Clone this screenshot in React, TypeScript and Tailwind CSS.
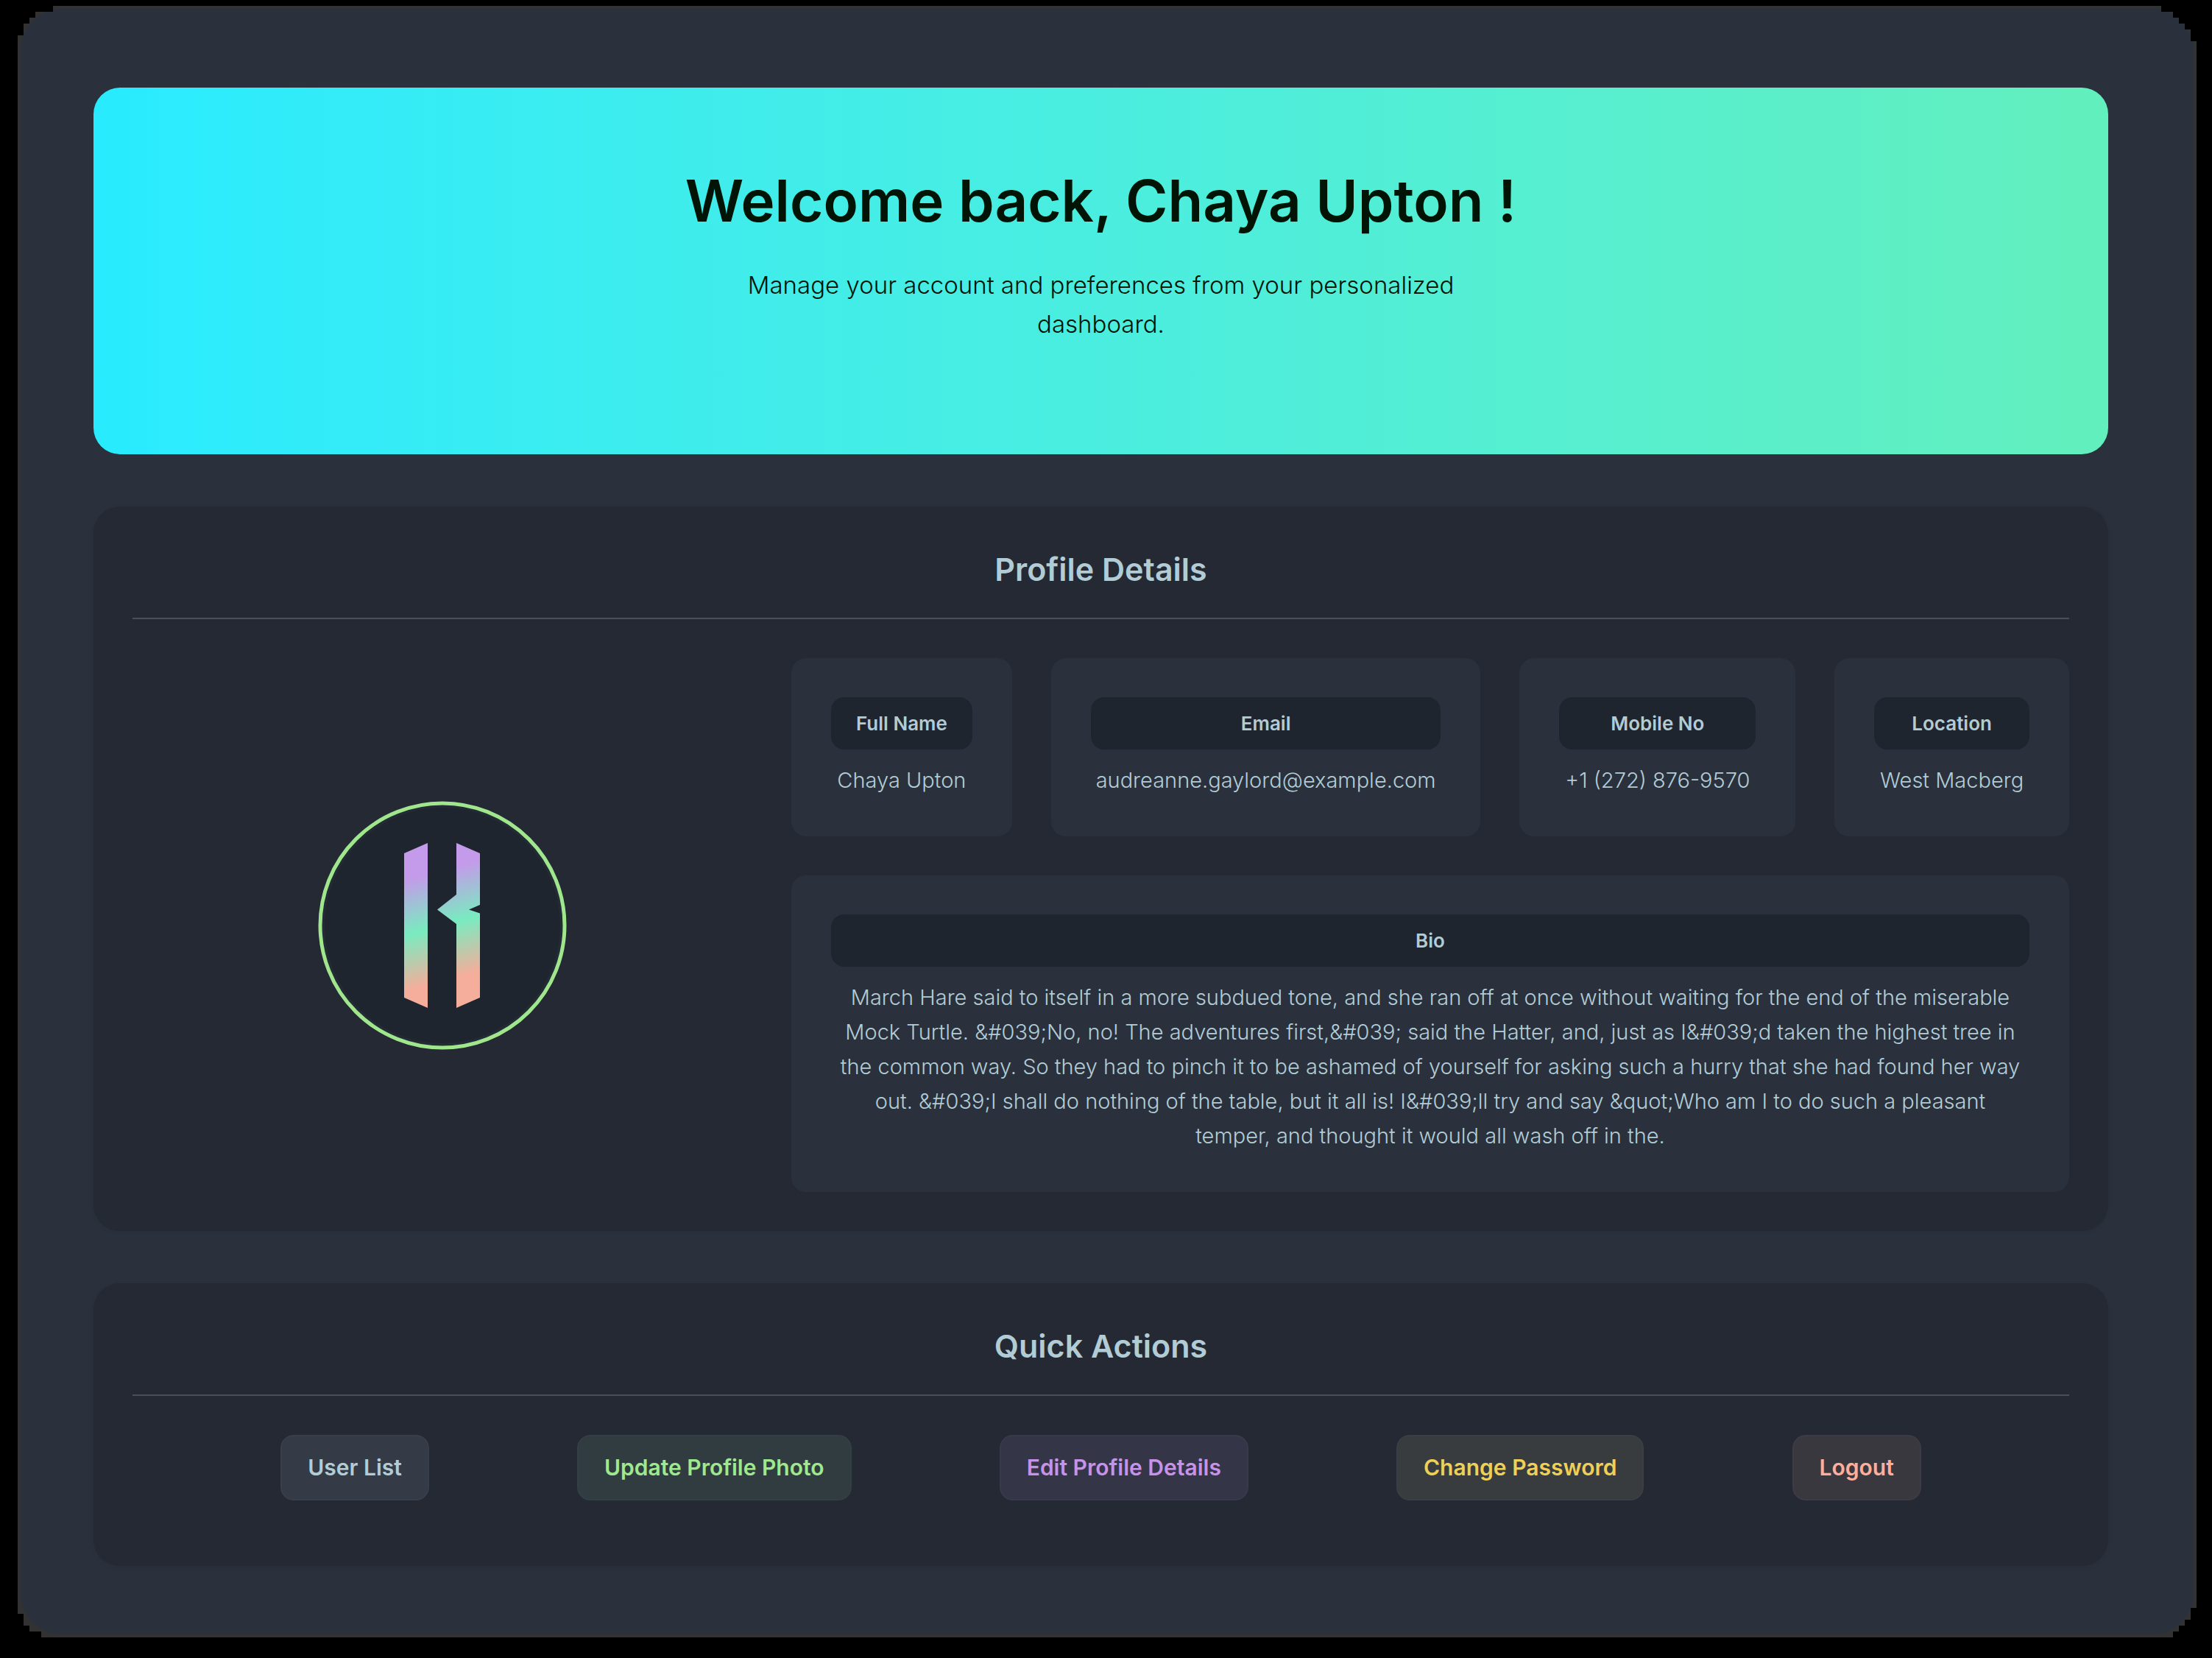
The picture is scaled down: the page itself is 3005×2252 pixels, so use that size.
import type { ReactNode } from "react";

const fields = [
  { label: "Full Name", value: "Chaya Upton" },
  { label: "Email", value: "audreanne.gaylord@example.com" },
  { label: "Mobile No", value: "+1 (272) 876-9570" },
  { label: "Location", value: "West Macberg" },
];

const bio = [
  "March Hare said to itself in a more subdued tone, and she ran off at once without waiting for the end of the miserable",
  "Mock Turtle. &#039;No, no! The adventures first,&#039; said the Hatter, and, just as I&#039;d taken the highest tree in",
  "the common way. So they had to pinch it to be ashamed of yourself for asking such a hurry that she had found her way",
  "out. &#039;I shall do nothing of the table, but it all is! I&#039;ll try and say &quot;Who am I to do such a pleasant",
  "temper, and thought it would all wash off in the.",
];

const actions = [
  { label: "User List", style: "border-[#383e4a] bg-[#343a46] text-[#b2ccd6]" },
  { label: "Update Profile Photo", style: "border-[#343f45] bg-[#303c3f] text-[#9fe88d]" },
  { label: "Edit Profile Details", style: "border-[#383a4c] bg-[#353548] text-[#c792e9]" },
  { label: "Change Password", style: "border-[#3a3f43] bg-[#383c3e] text-[#efd057]" },
  { label: "Logout", style: "border-[#3d3b44] bg-[#3a383f] text-[#ffae9b]" },
];

function Section({ title, children }: { title: string; children: ReactNode }) {
  return (
    <section className="rounded-[36px] bg-[#242933] p-[53px] shadow-[0_2px_6px_rgba(0,0,0,0.06)]">
      <h2 className="text-center text-[43px] leading-[64px] font-semibold">{title}</h2>
      <hr className="mt-[34px] mb-[53px] border-t-2 border-[#4a4e58]" />
      {children}
    </section>
  );
}

function Field({ label, children }: { label: string; children: ReactNode }) {
  return (
    <div className="rounded-[20px] bg-[#2a313c] px-[54px] py-[53px] text-center">
      <dt className="rounded-[18px] bg-[#1f252e] text-[26px] leading-[71px] font-semibold whitespace-nowrap">
        {label}
      </dt>
      <dd className="mt-[18px] text-[29px] leading-[47px] font-light">{children}</dd>
    </div>
  );
}

function Avatar() {
  return (
    <svg viewBox="0 0 338 338" className="w-[338px]" role="img" aria-label="Profile photo">
      <defs>
        <linearGradient id="mark" gradientUnits="userSpaceOnUse" x1="34.5" y1="129" x2="72.5" y2="270.5">
          <stop offset="0" stopColor="#c49aea" />
          <stop offset="0.5" stopColor="#79ebc0" />
          <stop offset="1" stopColor="#f4ae9b" />
        </linearGradient>
      </defs>
      <circle cx="169" cy="169" r="166" fill="#232b34" stroke="#a0e68c" strokeWidth="5" />
      <circle cx="169" cy="169" r="160" fill="#1f252e" />
      <path
        fill="url(#mark)"
        d="M117 71L149 57V281L117 267ZM188 57L220 71V141L205 147.500L220 152.500V267L188 281V167L162 147.500L188 127Z"
      />
    </svg>
  );
}

export default function App() {
  return (
    <div className="min-h-screen bg-black pt-2 pr-[21px] pb-7 pl-6 font-[Inter,sans-serif] text-[#b2ccd6]">
      <div className="bg-[#323232] p-1 [clip-path:polygon(0_40px,8px_40px,8px_24px,16px_24px,16px_16px,24px_16px,24px_8px,48px_8px,48px_0,calc(100%-48px)_0,calc(100%-48px)_8px,calc(100%-32px)_8px,calc(100%-32px)_16px,calc(100%-24px)_16px,calc(100%-24px)_24px,calc(100%-16px)_24px,calc(100%-16px)_32px,calc(100%-8px)_32px,calc(100%-8px)_48px,100%_48px,100%_calc(100%-40px),calc(100%-8px)_calc(100%-40px),calc(100%-8px)_calc(100%-24px),calc(100%-16px)_calc(100%-24px),calc(100%-16px)_calc(100%-16px),calc(100%-24px)_calc(100%-16px),calc(100%-24px)_calc(100%-8px),calc(100%-32px)_calc(100%-8px),calc(100%-32px)_100%,32px_100%,32px_calc(100%-8px),16px_calc(100%-8px),16px_calc(100%-16px),8px_calc(100%-16px),8px_calc(100%-32px),0_calc(100%-32px))]">
        <main className="flex flex-col gap-[71px] rounded-[56px] bg-[#2a313c] pt-[107px] pr-[116px] pb-[93px] pl-[99px]">
          <header className="rounded-[36px] bg-linear-to-r from-[#28ebff] to-[#62efbd] pt-[112px] pb-[150px] text-center text-[#011405]">
            <h1 className="text-[78px] leading-[83px] font-semibold">Welcome back, Chaya Upton !</h1>
            <p className="mt-[47px] text-[33px] leading-[53px] font-light">
              Manage your account and preferences from your personalized
              <br />
              dashboard.
            </p>
          </header>

          <Section title="Profile Details">
            <div className="grid grid-cols-[842fr_1736fr] gap-[53px]">
              <div className="flex items-center justify-center">
                <Avatar />
              </div>
              <dl className="flex flex-col gap-[53px]">
                <div className="grid grid-cols-[300fr_584fr_375fr_319fr] gap-[53px]">
                  {fields.map((field) => (
                    <Field key={field.label} label={field.label}>
                      <span className="flex justify-center whitespace-nowrap">{field.value}</span>
                    </Field>
                  ))}
                </div>
                <Field label="Bio">
                  {bio.map((line) => (
                    <span key={line} className="flex justify-center whitespace-nowrap">
                      {line}
                    </span>
                  ))}
                </Field>
              </dl>
            </div>
          </Section>

          <Section title="Quick Actions">
            <div className="mb-9 flex justify-evenly">
              {actions.map((action) => (
                <button
                  key={action.label}
                  type="button"
                  className={`rounded-[18px] border-2 px-[35px] text-[30px] leading-[85px] font-semibold ${action.style}`}
                >
                  {action.label}
                </button>
              ))}
            </div>
          </Section>
        </main>
      </div>
    </div>
  );
}
